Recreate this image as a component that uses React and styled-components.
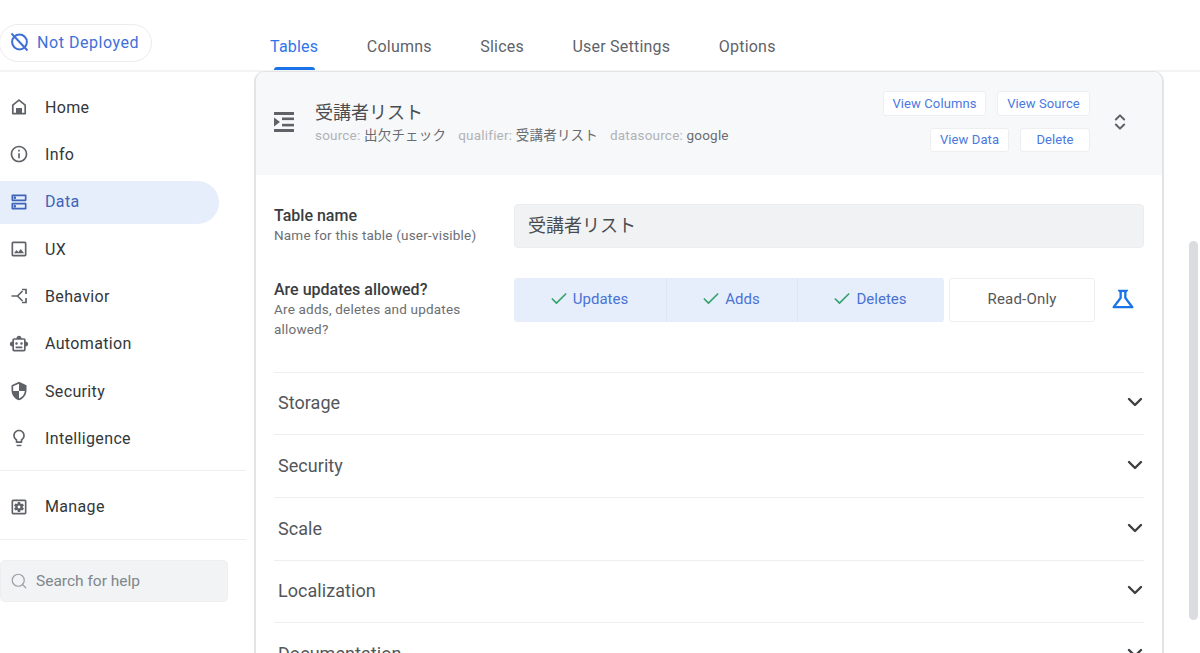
import styled, { createGlobalStyle } from 'styled-components';
import { Check, ChevronDown, ChevronsUpDown, Search } from 'lucide-react';
import {
  MdOutlineDns,
  MdOutlineImage,
  MdOutlineInfo,
  MdOutlineLightbulb,
  MdOutlineScience,
  MdOutlineSecurity,
  MdOutlineSettingsApplications,
  MdOutlineSmartToy,
} from 'react-icons/md';

const JP = '"Noto Sans CJK JP"';
const LABEL_FONT = `Roboto, ${JP}, sans-serif`;

const GlobalStyle = createGlobalStyle`
  html, body { margin: 0; height: 100%; overflow: hidden; background: #fff; }
  body { font-family: ${LABEL_FONT}; color: #3c4043; }
  * { box-sizing: border-box; }
`;

const Shell = styled.div`
  height: 653px;
  display: flex;
  flex-direction: column;
  overflow: hidden;
`;

const TopBar = styled.header`
  height: 72px;
  flex: none;
  display: flex;
  border-bottom: 2px solid #f3f3f4;
`;

const TopLeft = styled.div`
  width: 254px;
  flex: none;
  padding-top: 24px;
`;

const DeployPill = styled.div`
  width: 153px;
  height: 38px;
  margin-left: -1px;
  display: flex;
  align-items: center;
  gap: 8px;
  padding: 0 0 2px 10px;
  border: 1px solid #ececee;
  border-radius: 19px;
  color: #3f6fd8;
  font-size: 16px;
  letter-spacing: 0.55px;
  white-space: nowrap;
`;

const Tabs = styled.nav`
  display: flex;
  gap: 48.5px;
  padding-left: 16px;
`;

const Tab = styled.div`
  height: 70px;
  padding-top: 37px;
  font-size: 16px;
  line-height: 20px;
  letter-spacing: 0.22px;
  position: relative;
  color: ${(p) => (p.$active ? '#2f74e8' : '#5f6368')};

  ${(p) =>
    p.$active &&
    `&::after {
      content: '';
      position: absolute;
      left: 4px;
      right: 3px;
      bottom: 0;
      height: 3px;
      border-radius: 3px 3px 0 0;
      background: #1a73e8;
    }`}
`;

const Body = styled.div`
  flex: 1;
  min-height: 0;
  display: flex;
`;

const Sidebar = styled.aside`
  width: 254px;
  flex: none;
  padding-top: 14px;
`;

const NavList = styled.div`
  width: 246px;
  display: flex;
  flex-direction: column;
`;

const NavItem = styled.div`
  width: 219px;
  height: 43px;
  margin-bottom: 4.35px;
  display: flex;
  align-items: center;
  padding: 0 0 1px 8px;
  border-radius: 0 22px 22px 0;
  font-size: 16px;
  letter-spacing: 0.35px;
  background: ${(p) => (p.$active ? '#e6eefb' : 'transparent')};
  color: ${(p) => (p.$active ? '#3f63b8' : '#33373a')};
`;

const NavIcon = styled.span`
  width: 37px;
  flex: none;
  display: flex;
  padding-left: 1px;
  color: ${(p) => (p.$active ? '#3f63b8' : '#5f6368')};
`;

const NavRule = styled.div`
  width: 246px;
  height: 1px;
  background: #eeeeef;
`;

const RuleGap = styled.div`
  height: 4.8px;
`;

const ManageGroup = styled.div`
  padding: 15px 0 6px;
`;

const SearchBox = styled.div`
  width: 228px;
  height: 42px;
  margin-top: 20px;
  display: flex;
  align-items: center;
  gap: 8px;
  padding-left: 9px;
  background: #f1f3f4;
  border: 1px solid #eceef0;
  border-radius: 5px;
  color: #80868b;
  font-size: 15.5px;

  svg {
    color: #9aa0a6;
  }
`;

const Main = styled.main`
  width: 910px;
  flex: none;
  min-height: 0;
`;

const Card = styled.section`
  border: 1px solid #e3e4e6;
  border-top: 0;
  border-bottom: 0;
  border-left-width: 2px;
  border-right-width: 2px;
  border-radius: 10px 10px 0 0;
  overflow: hidden;
  box-shadow: 0 -1px 0 #e3e4e6;
`;

const CardHead = styled.div`
  height: 103px;
  display: flex;
  align-items: center;
  padding: 0 32px 0 17px;
  background: #f7f8fa;
`;

const HeadIcon = styled.div`
  width: 42px;
  flex: none;
  display: flex;
  margin-bottom: 4px;
  color: #5f6368;
`;

const HeadText = styled.div`
  flex: 1;
  padding-bottom: 2px;
`;

const HeadTitle = styled.div`
  font-size: 18px;
  line-height: 26px;
  color: #4a4d50;
`;

const MetaLine = styled.div`
  display: flex;
  gap: 12px;
  font-size: 13.5px;
  line-height: 19px;
  letter-spacing: 0.2px;
`;

const MetaKey = styled.span`
  color: #b0b3b6;
`;

const MetaValue = styled.span`
  color: #696c70;
`;

const HeadActions = styled.div`
  width: 230px;
  display: flex;
  flex-wrap: wrap;
  justify-content: flex-end;
  gap: 12px 11px;
  margin-bottom: 4px;
`;

const SmallButton = styled.div`
  width: ${(p) => p.$w}px;
  height: 24.5px;
  display: flex;
  align-items: center;
  justify-content: center;
  background: #fff;
  border: 1px solid #eceef0;
  border-radius: 3px;
  color: #4a78e0;
  font-size: 13px;
  letter-spacing: 0.1px;
`;

const UnfoldIcon = styled.div`
  margin: 0 0 3px 20px;
  display: flex;
  color: #5f6368;
`;

const CardBody = styled.div`
  padding: 0 18px;
  background: #fff;
`;

const Field = styled.div`
  display: flex;
  min-height: ${(p) => p.$h}px;
  padding-top: ${(p) => p.$top}px;
`;

const FieldLabel = styled.div`
  width: 240px;
  flex: none;
  padding-top: 2px;
`;

const FieldTitle = styled.div`
  font-size: 16px;
  font-weight: 500;
  line-height: 20px;
  margin-bottom: -1px;
  color: #3a3d40;
`;

const FieldHint = styled.div`
  font-size: 13.5px;
  line-height: 20px;
  letter-spacing: 0.2px;
  color: #6b6e72;
  width: 210px;
`;

const NameInput = styled.div`
  flex: 1;
  height: 43.5px;
  display: flex;
  align-items: center;
  padding: 0 0 4px 13px;
  background: #f1f2f4;
  border: 1px solid #ecedef;
  border-radius: 4px;
  font-size: 18px;
  color: #4a4d50;
`;

const ToggleRow = styled.div`
  flex: 1;
  display: flex;
  align-items: flex-start;
`;

const ToggleGroup = styled.div`
  width: 430px;
  height: 43.5px;
  display: flex;
  background: #e6eefb;
  border-radius: 3px;
`;

const Toggle = styled.div`
  width: ${(p) => p.$w}px;
  display: flex;
  align-items: center;
  justify-content: center;
  gap: 4px;
  padding: 0 3px 1px 0;
  color: #4a72d4;
  font-size: 15px;
  border-left: ${(p) => (p.$first ? '0' : '1px solid #dfe6f2')};

  svg {
    color: #34a36a;
  }
`;

const ReadOnly = styled.div`
  width: 146px;
  height: 43.5px;
  margin-left: 5px;
  display: flex;
  align-items: center;
  justify-content: center;
  padding-bottom: 1px;
  background: #fff;
  border: 1px solid #eceef0;
  border-radius: 3px;
  font-size: 15px;
  letter-spacing: 0.2px;
  color: #55585c;
`;

const FlaskIcon = styled.div`
  height: 43.5px;
  margin-left: 14px;
  padding-bottom: 1px;
  display: flex;
  align-items: center;
  color: #1a73e8;
`;

const Section = styled.div`
  height: 62.7px;
  display: flex;
  align-items: center;
  justify-content: space-between;
  padding: 0 0 1px 4px;
  border-top: 1px solid #eeeeef;
  font-size: 18px;
  letter-spacing: 0.05px;
  color: #53565a;

  svg {
    margin: 0 -3px 1px 0;
    color: #3c4043;
  }
`;

const ScrollRail = styled.div`
  flex: 1;
  padding: 169px 2px 0 25px;
`;

const ScrollThumb = styled.div`
  width: 9px;
  height: 379px;
  border-radius: 5px;
  background: #dadce0;
`;

function HomeIcon({ size }) {
  return (
    <svg width={size} height={size} viewBox="0 0 20 20" fill="none" stroke="currentColor" strokeWidth="1.7">
      <path d="M10 3.2 3.8 8.2V16.6H16.2V8.2Z" strokeLinejoin="round" />
      <rect x="7" y="11" width="6" height="5.6" fill="currentColor" stroke="none" />
    </svg>
  );
}

function BehaviorIcon({ size }) {
  return (
    <svg width={size} height={size} viewBox="0 0 20 20" fill="none" stroke="currentColor" strokeWidth="1.7">
      <path d="M2.5 10h6l5-5M8.5 10l5 5" />
      <path d="M13 3.5h4V8" />
      <path d="M13 16.5h4V12" />
    </svg>
  );
}

function NotDeployedIcon() {
  return (
    <svg width="19" height="20" viewBox="0 0 19 20" fill="none" stroke="currentColor" strokeWidth="2">
      <circle cx="9.5" cy="10" r="7.4" />
      <path d="M1.5 1.5 17.5 18.5" />
    </svg>
  );
}

function IndentIcon() {
  return (
    <svg width="22" height="22" viewBox="0 0 22 22" fill="currentColor">
      <rect x="1" y="1" width="20" height="3" />
      <path d="M1 6.5 7 11 1 15.5Z" />
      <rect x="9" y="6.5" width="12" height="2.6" />
      <rect x="9" y="12.8" width="12" height="2.6" />
      <rect x="1" y="18" width="20" height="3" />
    </svg>
  );
}

const navTop = [
  { label: 'Home', Icon: HomeIcon },
  { label: 'Info', Icon: MdOutlineInfo },
  { label: 'Data', Icon: MdOutlineDns, active: true },
  { label: 'UX', Icon: MdOutlineImage },
  { label: 'Behavior', Icon: BehaviorIcon },
  { label: 'Automation', Icon: MdOutlineSmartToy },
  { label: 'Security', Icon: MdOutlineSecurity },
  { label: 'Intelligence', Icon: MdOutlineLightbulb },
];

const tabs = ['Tables', 'Columns', 'Slices', 'User Settings', 'Options'];
const sections = ['Storage', 'Security', 'Scale', 'Localization', 'Documentation'];

export default function App() {
  return (
    <Shell>
      <GlobalStyle />
      <TopBar>
        <TopLeft>
          <DeployPill>
            <NotDeployedIcon />
            Not Deployed
          </DeployPill>
        </TopLeft>
        <Tabs>
          {tabs.map((t, i) => (
            <Tab key={t} $active={i === 0}>
              {t}
            </Tab>
          ))}
        </Tabs>
      </TopBar>

      <Body>
        <Sidebar>
          <NavList>
            {navTop.map(({ label, Icon, active }) => (
              <NavItem key={label} $active={active}>
                <NavIcon $active={active}>
                  <Icon size={20} />
                </NavIcon>
                {label}
              </NavItem>
            ))}
            <RuleGap />
            <NavRule />
            <ManageGroup>
              <NavItem>
                <NavIcon>
                  <MdOutlineSettingsApplications size={20} />
                </NavIcon>
                Manage
              </NavItem>
            </ManageGroup>
            <NavRule />
          </NavList>
          <SearchBox>
            <Search size={18} strokeWidth={1.6} />
            Search for help
          </SearchBox>
        </Sidebar>

        <Main>
          <Card>
            <CardHead>
              <HeadIcon>
                <IndentIcon />
              </HeadIcon>
              <HeadText>
                <HeadTitle>受講者リスト</HeadTitle>
                <MetaLine>
                  <span>
                    <MetaKey>source: </MetaKey>
                    <MetaValue>出欠チェック</MetaValue>
                  </span>
                  <span>
                    <MetaKey>qualifier: </MetaKey>
                    <MetaValue>受講者リスト</MetaValue>
                  </span>
                  <span>
                    <MetaKey>datasource: </MetaKey>
                    <MetaValue>google</MetaValue>
                  </span>
                </MetaLine>
              </HeadText>
              <HeadActions>
                <SmallButton $w={103}>View Columns</SmallButton>
                <SmallButton $w={93}>View Source</SmallButton>
                <SmallButton $w={79}>View Data</SmallButton>
                <SmallButton $w={70}>Delete</SmallButton>
              </HeadActions>
              <UnfoldIcon>
                <ChevronsUpDown size={20} strokeWidth={2.4} />
              </UnfoldIcon>
            </CardHead>

            <CardBody>
              <Field $h={92} $top={29}>
                <FieldLabel>
                  <FieldTitle>Table name</FieldTitle>
                  <FieldHint>Name for this table (user-visible)</FieldHint>
                </FieldLabel>
                <NameInput>受講者リスト</NameInput>
              </Field>
              <Field $h={104.5} $top={11}>
                <FieldLabel>
                  <FieldTitle>Are updates allowed?</FieldTitle>
                  <FieldHint>Are adds, deletes and updates allowed?</FieldHint>
                </FieldLabel>
                <ToggleRow>
                  <ToggleGroup>
                    <Toggle $w={152} $first>
                      <Check size={20} strokeWidth={2} />
                      Updates
                    </Toggle>
                    <Toggle $w={131}>
                      <Check size={20} strokeWidth={2} />
                      Adds
                    </Toggle>
                    <Toggle $w={147}>
                      <Check size={20} strokeWidth={2} />
                      Deletes
                    </Toggle>
                  </ToggleGroup>
                  <ReadOnly>Read-Only</ReadOnly>
                  <FlaskIcon>
                    <MdOutlineScience size={28} />
                  </FlaskIcon>
                </ToggleRow>
              </Field>
              {sections.map((s) => (
                <Section key={s}>
                  {s}
                  <ChevronDown size={24} strokeWidth={2.4} />
                </Section>
              ))}
            </CardBody>
          </Card>
        </Main>
        <ScrollRail>
          <ScrollThumb />
        </ScrollRail>
      </Body>
    </Shell>
  );
}
